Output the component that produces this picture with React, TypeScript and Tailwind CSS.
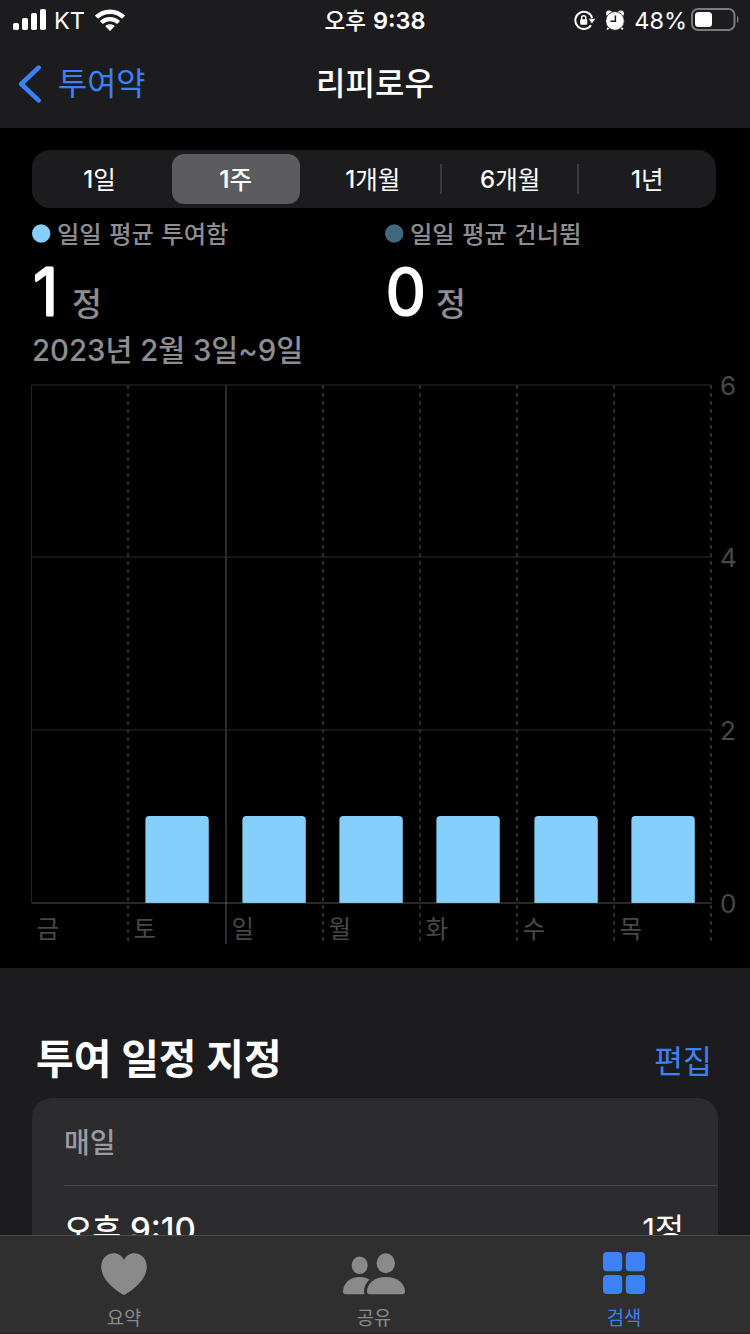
import type { ReactNode } from "react";

const ranges = [
  { count: "1", unit: "일" },
  { count: "1", unit: "주" },
  { count: "1", unit: "개월" },
  { count: "6", unit: "개월" },
  { count: "1", unit: "년" },
];

const gridLines = [
  { y: 385, label: "6" },
  { y: 557, label: "4" },
  { y: 730, label: "2" },
];

const days = [
  { label: "금", x: 31, bar: null },
  { label: "토", x: 128, bar: 145.4 },
  { label: "일", x: 226, bar: 242.4 },
  { label: "월", x: 323, bar: 339.4 },
  { label: "화", x: 420, bar: 436.4 },
  { label: "수", x: 517, bar: 534.4 },
  { label: "목", x: 614, bar: 631.4 },
];

function StatusBar() {
  return (
    <div className="flex h-10 items-center justify-between text-white">
      <div className="flex w-[250px] items-center pl-[13px]">
        <svg width="33" height="22" viewBox="0 0 33 22" fill="currentColor">
          <rect x="0" y="14" width="6" height="7" rx="1.8" />
          <rect x="9" y="9" width="6" height="12" rx="1.8" />
          <rect x="18" y="4" width="6" height="17" rx="1.8" />
          <rect x="27" y="0" width="6" height="21" rx="1.8" />
        </svg>
        <span className="mt-0.5 ml-2 text-[23.5px] leading-10">KT</span>
        <svg className="ml-[10px]" width="30" height="22" viewBox="0 0 30 22" fill="none" stroke="currentColor">
          <path d="M1.5 8.2C9 .9 21 .9 28.5 8.2" strokeWidth="4.4" />
          <path d="M6.4 13.6C11.200 9 18.800 9 23.600 13.600" strokeWidth="4.2" />
          <path d="M10.3 17.2C13 14.6 17 14.6 19.7 17.2L15 21.9Z" fill="currentColor" stroke="none" />
        </svg>
      </div>
      <div className="mt-0.5 flex items-baseline text-[23.5px] leading-10 font-semibold">
        <span className="text-[22.5px] font-medium">오후</span>
        <span className="ml-[7px]">9:38</span>
      </div>
      <div className="flex w-[250px] items-center justify-end pr-[11px]">
        <svg width="22" height="20" viewBox="0 0 22 20" fill="none" stroke="currentColor">
          <path d="M17 15.2A8.600 8.600 0 1 1 18.200 8" strokeWidth="2" />
          <path d="M14.800 8.800h6.400l-3.200 4.600z" fill="currentColor" stroke="none" />
          <rect x="6.200" y="9.200" width="7" height="5.600" rx="1" fill="currentColor" stroke="none" />
          <path d="M7.600 9.700V7.800a2.100 2.100 0 0 1 4.200 0v1.900" strokeWidth="1.400" />
        </svg>
        <svg className="ml-[9px]" width="20" height="21" viewBox="0 0 20 21">
          <g fill="currentColor">
            <circle cx="4.300" cy="3.600" r="3.200" />
            <circle cx="15.700" cy="3.600" r="3.200" />
          </g>
          <path d="M3.800 17.500l-1.600 2M16.200 17.500l1.600 2" stroke="currentColor" strokeWidth="2" />
          <circle cx="10" cy="10.900" r="9.300" fill="currentColor" stroke="#1c1c1e" strokeWidth="0.800" />
          <path d="M10.400 5.400v5.800H5.400" fill="none" stroke="#1c1c1e" strokeWidth="1.500" />
        </svg>
        <span className="mt-0.5 ml-[9px] text-[23.5px] leading-10">48%</span>
        <svg className="ml-[4px]" width="48" height="24" viewBox="0 0 48 24">
          <rect x="1" y="1" width="42.500" height="21" rx="6" fill="none" stroke="#7b7b7d" strokeWidth="2" />
          <rect x="4" y="4" width="17" height="15" rx="3.500" fill="#fff" />
          <path d="M46 8c2 1 2 6 0 7z" fill="#7b7b7d" />
        </svg>
      </div>
    </div>
  );
}

function NavBar() {
  return (
    <div className="flex h-[88px] items-center">
      <div className="flex w-[250px] items-center pl-[18px] text-[#3b82f7]">
        <svg width="24" height="38" viewBox="0 0 24 38" fill="none" stroke="currentColor" strokeWidth="4.600" strokeLinecap="round" strokeLinejoin="round">
          <path d="M20.600 2.600L3.200 19L20.600 35.400" />
        </svg>
        <span className="ml-4 text-[31.700px] leading-10">투여약</span>
      </div>
      <h1 className="w-[250px] text-center text-[32px] leading-10 font-medium text-white">리피로우</h1>
    </div>
  );
}

function RangePicker() {
  return (
    <div className="mx-8 flex h-[58px] w-[684px] items-center rounded-[18px] bg-[#1c1c1e] text-white">
      {ranges.map((r, i) => (
        <div key={i} className={`relative flex h-full items-center justify-center ${i === 0 ? "w-[135px]" : "flex-1"}`}>
          <div className={`flex h-[50px] w-32 items-center justify-center rounded-xl pt-0.5 ${i === 1 ? "bg-[#5b5b60]" : ""}`}>
            <span className={i === 1 ? "text-[24px] font-semibold" : "text-[24px] font-medium"}>{r.count}</span>
            <span className={i === 1 ? "text-[24.500px] font-medium" : "text-[24.500px]"}>{r.unit}</span>
          </div>
          {(i === 2 || i === 3) && <div className="absolute top-[14px] right-0 h-[30px] w-0.5 bg-[#3a3a3d]" />}
        </div>
      ))}
    </div>
  );
}

function Stat({ color, label, value, width }: { color: string; label: string; value: string; width: number }) {
  return (
    <div className="w-[353px]">
      <div className="flex h-[50px] items-center">
        <svg width="19" height="19" viewBox="0 0 19 19">
          <circle cx="9.200" cy="9.500" r="9.200" fill={color} />
        </svg>
        <span className="mt-0.5 ml-[6px] text-[24.300px] font-medium text-[#8d8d92] [word-spacing:1px]">{label}</span>
      </div>
      <div className="flex h-[70px] items-baseline">
        {/* rounded joins give the digits their soft terminals */}
        <svg width={width} height="58" className="overflow-visible">
          <text x="1" y="56.500" fill="#fff" stroke="#fff" strokeWidth="3.200" strokeLinejoin="round" fontSize="64" fontWeight="300">
            {value}
          </text>
        </svg>
        <span className="text-[32.500px] leading-none font-medium text-[#8d8d92]">정</span>
      </div>
    </div>
  );
}

function Chart() {
  return (
    <svg className="block" width="750" height="598" viewBox="0 370 750 598">
      {gridLines.map((l) => (
        <g key={l.label}>
          <path d={`M32 ${l.y}H712`} stroke="#161618" strokeWidth="2" />
          <text x="720" y={l.y + 10} fontSize="26" fill="#48484a">{l.label}</text>
        </g>
      ))}
      <text x="720" y="913" fontSize="26" fill="#48484a">0</text>
      <path d="M31.500 385V903" stroke="#242426" strokeWidth="1" />
      {days.map((d) => (
        <g key={d.label}>
          {d.bar && <path d={`M${d.bar} 903V820q0-4 4-4h55.400q4 0 4 4V903z`} fill="#84cffc" />}
          {d.label === "일" && <path d={`M${d.x} 385V944`} stroke="#2c2c2e" strokeWidth="2" />}
          {d.bar && d.label !== "일" && (
            <path d={`M${d.x} 385V944`} stroke="#2c2c2e" strokeWidth="2" strokeDasharray="4 4" />
          )}
          <text x={d.x + 5.5} y="938" fontSize="24.500" fill="#48484a">{d.label}</text>
        </g>
      ))}
      <path d="M711 385V944" stroke="#2c2c2e" strokeWidth="2" strokeDasharray="4 4" />
      <path d="M32 903H712" stroke="#8e8e93" strokeOpacity="0.280" strokeWidth="2" />
    </svg>
  );
}

function Schedule() {
  return (
    <div className="h-[267px] overflow-hidden bg-[#1c1c1e] pl-8">
      <div className="flex h-[130px] items-end justify-between pr-[38px] pl-1">
        <h2 className="pb-[9px] text-[41px] leading-[60px] font-bold text-white">투여 일정 지정</h2>
        <span className="pb-4 text-[31.500px] leading-10 text-[#3b82f7]">편집</span>
      </div>
      <div className="h-[160px] w-[686px] rounded-t-[20px] bg-[#2c2c2e] pl-8">
        <div className="flex h-[88px] items-center border-b border-[#464649] pt-0.5 text-[28px] font-medium text-[#9b9ba1]">매일</div>
        <div className="flex h-[88px] items-center justify-between pr-[34px] text-white">
          <div className="flex items-baseline font-medium">
            <span className="text-[31px]">오후</span>
            <span className="ml-[9px] text-[33px]">9:10</span>
          </div>
          <div className="flex items-baseline text-[31.500px]">1정</div>
        </div>
      </div>
    </div>
  );
}

function Tab({ label, active, children }: { label: string; active?: boolean; children: ReactNode }) {
  return (
    <div className={`flex w-[250px] flex-col items-center pt-4 pr-0.5 ${active ? "text-[#3b82f7]" : "text-[#8a8a8b]"}`}>
      {children}
      <span className="mt-[9px] text-[18.800px] leading-[28px]">{label}</span>
    </div>
  );
}

function TabBar() {
  return (
    <div className="flex h-[99px] border-t border-b border-t-[#4b4b4d] border-b-[#2b2228] bg-[#2f2f30]">
      <Tab label="요약">
        <svg width="46" height="44" viewBox="0 0 46 44" fill="currentColor">
          <path d="M23 43C22 43 .2 30.500 .2 14.800C.2 6.800 5.800 1.200 12.500 1.200C17.300 1.200 21 3.800 23 7.800C25 3.800 28.700 1.200 33.500 1.200C40.200 1.200 45.800 6.800 45.800 14.800C45.800 30.500 24 43 23 43Z" />
        </svg>
      </Tab>
      <Tab label="공유">
        <svg width="62" height="44" viewBox="0 0 62 44" fill="currentColor">
          <ellipse cx="16.700" cy="13.200" rx="8" ry="8.800" />
          <path d="M2.500 42.200Q0 42.200 0 39.500C0 31 7.500 25 16.700 25S33 31 33 39.500V42.200Z" />
          <ellipse cx="42.800" cy="11.200" rx="9.200" ry="10" />
          <path d="M26.500 42.200Q24 42.200 24 39.500C24 31 32 25 42.800 25S62 31 62 39.500Q62 42.200 59.500 42.200Z" stroke="#2f2f30" strokeWidth="6" />
          <path d="M26.500 42.200Q24 42.200 24 39.500C24 31 32 25 42.800 25S62 31 62 39.500Q62 42.200 59.500 42.200Z" />
        </svg>
      </Tab>
      <Tab label="검색" active>
        <svg width="42" height="44" viewBox="0 0 42 44" fill="currentColor">
          <rect x="0" y="0" width="19.200" height="19.200" rx="4" />
          <rect x="22.800" y="0" width="19.200" height="19.200" rx="4" />
          <rect x="0" y="22.900" width="19.200" height="19.200" rx="4" />
          <rect x="22.800" y="22.900" width="19.200" height="19.200" rx="4" />
        </svg>
      </Tab>
    </div>
  );
}

export default function App() {
  return (
    <div className="h-[1334px] w-[750px] overflow-hidden bg-black font-[Inter,'Noto_Sans_CJK_KR',sans-serif]">
      <div className="bg-[#1c1c1e]">
        <StatusBar />
        <NavBar />
      </div>
      <div className="h-[242px] pt-[22px]">
        <RangePicker />
        <div className="flex pl-8">
          <Stat color="#84cffc" label="일일 평균 투여함" value="1" width={40} />
          <Stat color="#426780" label="일일 평균 건너뜀" value="0" width={51} />
        </div>
        <p className="pt-px pl-8 text-[29.300px] leading-[44px] font-medium text-[#8d8d92]">2023년 2월 3일~9일</p>
      </div>
      <Chart />
      <Schedule />
      <TabBar />
    </div>
  );
}
